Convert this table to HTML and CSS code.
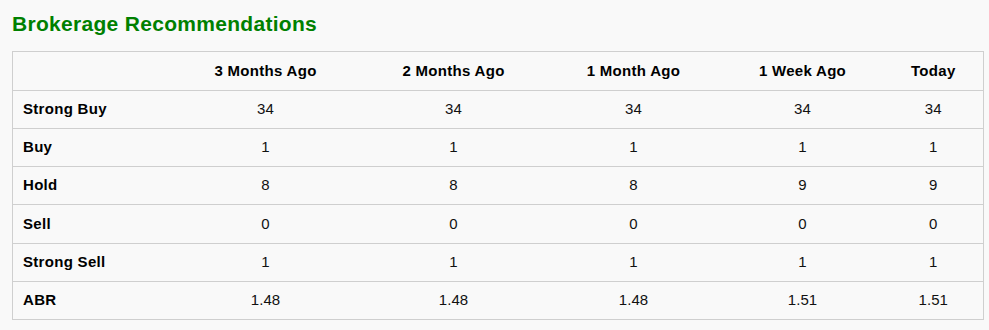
FILE: index.html
```html
<!DOCTYPE html>
<html>
<head>
<meta charset="utf-8">
<link rel="stylesheet" href="styles.css">
</head>
<body>
<div class="wrap">
  <h2 class="title">Brokerage Recommendations</h2>
  <table class="recs">
    <colgroup>
      <col class="c-label">
      <col class="c1">
      <col class="c2">
      <col class="c3">
      <col class="c4">
      <col class="c5">
    </colgroup>
    <thead>
      <tr>
        <th class="label"></th>
        <th>3 Months Ago</th>
        <th>2 Months Ago</th>
        <th>1 Month Ago</th>
        <th>1 Week Ago</th>
        <th>Today</th>
      </tr>
    </thead>
    <tbody>
      <tr><th class="label">Strong Buy</th><td>34</td><td>34</td><td>34</td><td>34</td><td>34</td></tr>
      <tr><th class="label">Buy</th><td>1</td><td>1</td><td>1</td><td>1</td><td>1</td></tr>
      <tr><th class="label">Hold</th><td>8</td><td>8</td><td>8</td><td>9</td><td>9</td></tr>
      <tr><th class="label">Sell</th><td>0</td><td>0</td><td>0</td><td>0</td><td>0</td></tr>
      <tr><th class="label">Strong Sell</th><td>1</td><td>1</td><td>1</td><td>1</td><td>1</td></tr>
      <tr><th class="label">ABR</th><td>1.48</td><td>1.48</td><td>1.48</td><td>1.51</td><td>1.51</td></tr>
    </tbody>
  </table>
</div>
</body>
</html>
```

FILE: styles.css
```css
html, body {
  margin: 0;
  padding: 0;
  background: #f9f9f9;
}
body {
  font-family: "Liberation Sans", Arial, sans-serif;
  color: #111;
}
.wrap {
  padding: 12px 6px 0 12px;
}
.title {
  margin: 0 0 15px 0;
  font-size: 21px;
  line-height: 24px;
  font-weight: bold;
  color: #008000;
  letter-spacing: 0.3px;
}
.recs {
  width: 972px;
  table-layout: fixed;
  border-collapse: collapse;
  border: 1px solid #cfcfcf;
}
.c-label { width: 157px; }
.c1 { width: 192px; }
.c2 { width: 184px; }
.c3 { width: 176px; }
.c4 { width: 162px; }
.c5 { width: 100px; }
.recs th,
.recs td {
  border-top: 1px solid #cfcfcf;
  padding: 0 0 2px 0;
  height: 35.1667px;
  text-align: center;
  font-size: 15px;
  vertical-align: middle;
}
.recs thead th {
  height: 36px;
  font-weight: bold;
  color: #000;
  letter-spacing: 0.3px;
}
.recs th.label {
  text-align: left;
  padding-left: 10px;
  font-weight: bold;
  color: #000;
  letter-spacing: 0.3px;
}
.recs td {
  color: #111;
  letter-spacing: 0.1px;
}
```
